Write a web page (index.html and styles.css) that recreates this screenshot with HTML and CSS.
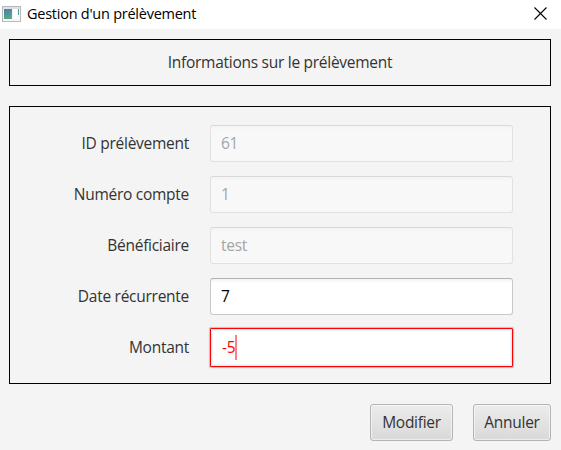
FILE: index.html
```html
<!DOCTYPE html>
<html lang="fr">
<head>
<meta charset="utf-8">
<title>Gestion d'un prélèvement</title>
<link rel="stylesheet" href="styles.css">
</head>
<body>
<header class="titlebar">
  <svg class="app-icon" width="19" height="16" viewBox="0 0 19 16">
    <defs><linearGradient id="g" gradientUnits="userSpaceOnUse" x1="2" y1="2" x2="9" y2="14"><stop offset="0" stop-color="#4a77ae"/><stop offset="1" stop-color="#5cb578"/></linearGradient></defs>
    <rect x="0.5" y="0.5" width="18" height="15" fill="#f6f7fa" stroke="#b5b9bd"/>
    <rect x="1" y="1" width="17" height="2" fill="#dfe2e5"/>
    <rect x="2" y="3" width="8" height="10" fill="url(#g)"/>
    <rect x="11" y="3" width="4" height="10" fill="#fff"/>
    <rect x="16" y="3" width="1" height="6" fill="#55a08e"/>
  </svg>
  <h1 class="title">Gestion d'un prélèvement</h1>
  <svg class="close" width="13" height="13" viewBox="0 0 13 13"><path d="M.5.5l12 12M12.5.5l-12 12" stroke="#000" stroke-width="1.1"/></svg>
</header>
<main class="content">
  <section class="panel heading"><span>Informations sur le prélèvement</span></section>
  <section class="panel form">
    <span class="label">ID prélèvement</span><div class="field disabled">61</div>
    <span class="label">Numéro compte</span><div class="field disabled">1</div>
    <span class="label">Bénéficiaire</span><div class="field disabled">test</div>
    <span class="label">Date récurrente</span><div class="field">7</div>
    <span class="label">Montant</span><div class="field invalid">-5<i class="caret"></i></div>
  </section>
  <footer class="actions">
    <button class="btn modify">Modifier</button>
    <button class="btn cancel">Annuler</button>
  </footer>
</main>
</body>
</html>
```
FILE: styles.css
```css
* { box-sizing: border-box; }
body {
  margin: 0;
  width: 561px;
  height: 450px;
  overflow: hidden;
  background: #f4f4f4;
  color: #333;
  font: 15.5px/20px "Open Sans", "Noto Sans", sans-serif;
  letter-spacing: -0.27px;
}
.titlebar {
  display: flex;
  align-items: center;
  height: 29px;
  padding: 0 14px 2px 2px;
  background: #fff;
  color: #000;
}
.app-icon { margin-right: 6px; }
.title {
  flex: 1;
  margin: 0;
  font-size: 14.5px;
  font-weight: 400;
  letter-spacing: -0.25px;
}
.content { padding: 10px 10px 0 9px; }
.panel { border: 1px solid #000; }
.heading {
  display: flex;
  align-items: center;
  justify-content: center;
  height: 47px;
  padding-bottom: 2px;
}
.form {
  display: grid;
  grid-template-columns: 179px 303px;
  grid-auto-rows: 37px;
  column-gap: 21px;
  row-gap: 14px;
  align-items: center;
  align-content: start;
  height: 278px;
  margin-top: 20px;
  padding-top: 18px;
}
.label {
  padding-bottom: 2px;
  text-align: right;
  white-space: nowrap;
}
.field {
  display: flex;
  align-items: center;
  height: 37px;
  padding: 0 10px 2px;
  border: 1px solid #c8c8c8;
  border-top-color: #b2b2b2;
  border-radius: 3px;
  background: linear-gradient(#f2f2f2, #fff 4px);
  color: #000;
}
.disabled {
  border-color: #e1e1e1;
  border-top-color: #d9d9d9;
  background: linear-gradient(#f3f3f3, #f8f8f8 4px);
  color: #a5a5a5;
}
.invalid {
  height: 39px;
  padding: 0 11px 2px;
  border: 1px solid #f00;
  border-radius: 1px;
  background: #fff;
  box-shadow: inset 0 0 0 1px #d9eff8, inset 0 0 0 2px #eaf6fb, 0 0 1px 0.5px #9bcfe2;
  color: #f00;
}
.caret {
  width: 2px;
  height: 25px;
  margin-top: 1px;
  background: #ff8080;
}
.actions {
  display: flex;
  justify-content: flex-end;
  gap: 20px;
  margin-top: 20px;
}
.btn {
  height: 37px;
  padding: 0 0 2px;
  border: 1px solid #b5b5b5;
  border-radius: 3px;
  background: linear-gradient(#ececec, #d9d9d9);
  box-shadow: inset 0 0 0 1px rgba(255, 255, 255, 0.5);
  color: #333;
  font: inherit;
  letter-spacing: inherit;
}
.modify { width: 83px; }
.cancel { width: 78px; }
```
